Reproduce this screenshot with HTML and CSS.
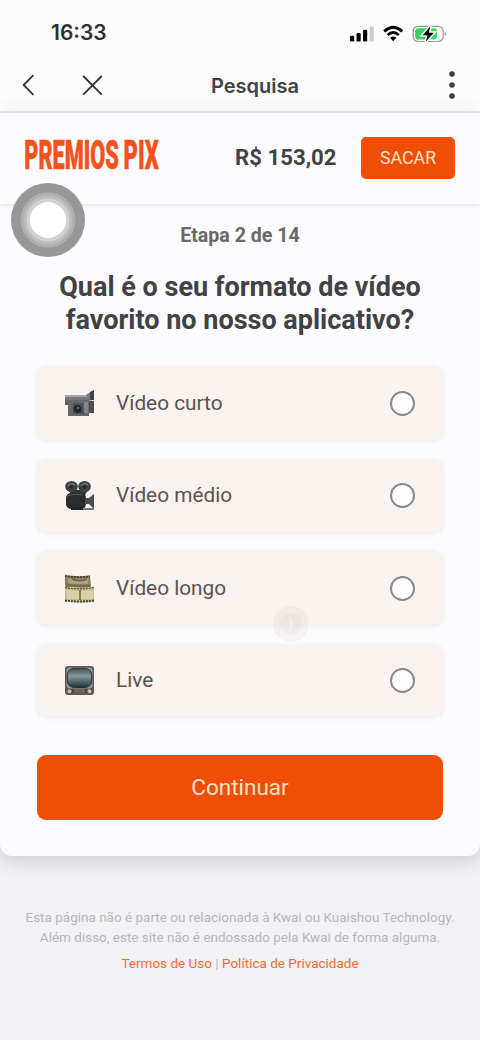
FILE: index.html
```html
<!DOCTYPE html>
<html lang="pt-BR">
<head>
<meta charset="utf-8">
<title>Pesquisa</title>
<link rel="stylesheet" href="styles.css">
</head>
<body>
<div class="status">
  <span class="time">16:33</span>
  <svg class="status-icons" width="98" height="20" viewBox="0 0 98 20">
    <rect x="1" y="11.8" width="4.2" height="5.6" rx="1.2"/>
    <rect x="7.5" y="9" width="4.2" height="8.4" rx="1.2"/>
    <rect x="14" y="5.7" width="4.2" height="11.7" rx="1.2"/>
    <rect x="20.6" y="2.5" width="4.2" height="14.9" rx="1.2" fill="#ccc"/>
    <g fill="none" stroke="#000" stroke-width="2.9">
      <path d="M35.2 7.4Q44.2-.8 53.2 7.4"/>
      <path d="M38.6 11Q44.2 6 49.8 11"/>
    </g>
    <path d="M41 13.7Q44.2 11.1 47.4 13.7L44.2 17.2Z"/>
    <rect x="64.2" y="2.3" width="30" height="15.2" rx="5" fill="#fff" stroke="#979797" stroke-width="1.2"/>
    <path d="M95.7 8Q98.2 9.9 95.7 12Z" fill="#888"/>
    <rect x="66.2" y="4.3" width="21.6" height="11.2" rx="3" fill="#35d45c"/>
    <path d="M81.4 2.3L73.6 11.3H78.5L76.8 17.8L84.8 8.7H79.8Z" stroke="#fff" stroke-width="3"/>
    <path d="M81.4 2.3L73.6 11.3H78.5L76.8 17.8L84.8 8.7H79.8Z"/>
  </svg>
</div>
<nav class="nav">
  <svg class="nav-icon" width="84" height="24" viewBox="0 0 84 24">
    <path d="M12.9 2.700L3.700 12L12.900 21.400M63.700 3.500L81.300 21.100M81.300 3.500L63.700 21.100"/>
  </svg>
  <span class="nav-title">Pesquisa</span>
  <svg class="dots" width="8" height="30" viewBox="0 0 8 30">
    <circle cx="4" cy="4" r="2.8"/><circle cx="4" cy="15" r="2.8"/><circle cx="4" cy="26" r="2.8"/>
  </svg>
</nav>
<main class="card">
  <header class="header">
    <svg class="logo" width="138" height="50" viewBox="0 0 138 50">
      <text transform="translate(.3 38) scale(.56 1)" textLength="169" lengthAdjust="spacingAndGlyphs">PREMIOS</text>
      <text transform="translate(99.6 38) scale(.56 1)" textLength="63" lengthAdjust="spacingAndGlyphs">PIX</text>
    </svg>
    <span class="balance">R$ 153,02</span>
    <span class="withdraw">SACAR</span>
  </header>
  <section class="survey">
    <p class="step">Etapa 2 de 14</p>
    <h1 class="question">Qual é o seu formato de vídeo<br>favorito no nosso aplicativo?</h1>
    <div class="options">
      <label class="option">
        <svg class="icon" width="32" height="32" viewBox="0 0 32 32">
          <path d="M1 7H22L30 2V12L23 13H1Z" fill="#77777d"/>
          <path d="M1 7H22L24 9H1Z" fill="#a5a5ad"/>
          <path d="M26 4L30 2V12H26Z" fill="#414348"/>
          <path d="M1 12H4V17H1ZM4 12H25V28H4Z" fill="#66676c"/>
          <path d="M25 13H30V25H25Z" fill="#4c4e52"/>
          <rect x="9" y="15" width="12" height="11" fill="#505258"/>
          <circle cx="13.500" cy="21" r="4" fill="#24282b"/><circle cx="14" cy="20" r="1.2" fill="#657073"/>
          <path d="M20 14H24V25H20Z" fill="#84858a"/>
        </svg>
        <span class="label">Vídeo curto</span><span class="radio"></span>
      </label>
      <label class="option">
        <svg class="icon" width="32" height="32" viewBox="0 0 32 32">
          <path d="M5 10H24L21 15H7Z" fill="#303638"/>
          <ellipse cx="7.500" cy="6.500" rx="6.300" ry="5.500" fill="#3c4143"/><ellipse cx="20.500" cy="6.500" rx="6.300" ry="5.500" fill="#3c4143"/>
          <path d="M4 6Q7 2 11 5M17 6Q20 2 24 5" fill="none" stroke="#777d7e" stroke-width="1.2"/>
          <circle cx="7.500" cy="7" r="1.7" fill="#1f2425"/><circle cx="20.500" cy="7" r="1.7" fill="#1f2425"/>
          <rect x="2" y="13" width="20" height="16" rx="5" fill="#292f31"/>
          <path d="M4 16Q8 13 18 15" stroke="#596163" fill="none"/>
          <path d="M21 18H25L30 14V29L25 24H21Z" fill="#474e50"/>
          <path d="M14 28H30V30H14Z" fill="#777c7e"/><path d="M7 27H19V30H7Z" fill="#202628"/>
        </svg>
        <span class="label">Vídeo médio</span><span class="radio"></span>
      </label>
      <label class="option">
        <svg class="icon" width="32" height="32" viewBox="0 0 32 32">
          <path d="M1 2Q12 4 26 2.500L27 14H6L1 17Z" fill="#8b8261"/>
          <path d="M4 5Q15 7 24 5V11H4Z" fill="#aaa07b"/>
          <path d="M1 14Q15 16 30 14V29Q16 30.500 1 28Z" fill="#c8bd91"/>
          <path d="M3 17Q10 18 15 18V26H3ZM17 18L29 17V26H17Z" fill="#d9cea7"/>
          <path d="M1 3Q13 5 26 3.500M1 27.500Q15 29.500 30 27.500" fill="none" stroke="#494435" stroke-width="2" stroke-dasharray="2 1"/>
          <path d="M2 10Q15 14 26 11V14Q15 16 3 13Z" fill="#756c4e"/>
          <path d="M1 14.500Q15 17 30 14.500" fill="none" stroke="#625b45" stroke-width="1.500" stroke-dasharray="2 1"/>
          <path d="M16 17V27M8 6Q15 9 23 6" fill="none" stroke="#6c644a" stroke-width="1.400"/>
        </svg>
        <span class="label">Vídeo longo</span><span class="radio"></span>
      </label>
      <label class="option">
        <svg class="icon" width="32" height="32" viewBox="0 0 32 32">
          <defs><linearGradient id="screen" x2="0" y2="1"><stop stop-color="#3d5154"/><stop offset=".4" stop-color="#82999b"/><stop offset="1" stop-color="#1e3538"/></linearGradient></defs>
          <rect x="1" y="1" width="29" height="29" rx="3" fill="#655755"/>
          <rect x="2.500" y="2.500" width="26" height="21" rx="3" fill="#9b908b"/>
          <rect x="3.300" y="3.300" width="24.400" height="19.200" rx="7" fill="url(#screen)" stroke="#263235"/>
          <path d="M3 24H28V28H3Z" fill="#504542"/>
          <circle cx="5.500" cy="26.300" r="2" fill="#c9bdb5"/><circle cx="25.500" cy="26.300" r="2" fill="#c9bdb5"/>
          <path d="M10 25H21M10 27H21" stroke="#8f817b"/>
        </svg>
        <span class="label">Live</span><span class="radio"></span>
      </label>
    </div>
    <div class="continue">Continuar</div>
  </section>
</main>
<footer class="footer">
  <p class="legal">Esta página não é parte ou relacionada à Kwai ou Kuaishou Technology.<br>Além disso, este site não é endossado pela Kwai de forma alguma.</p>
  <p class="links"><span class="link">Termos de Uso</span> | <span class="link">Política de Privacidade</span></p>
</footer>
<div class="touch"></div>
<svg class="watermark" width="38" height="40" viewBox="0 0 38 40">
  <circle cx="19" cy="20" r="18" fill="#b9acb0" opacity=".11"/>
  <circle cx="19" cy="20" r="11" fill="#b9acb0" opacity=".07"/>
  <path d="M18 11L17 29L22 21Z" fill="#fff" opacity=".3"/>
</svg>
</body>
</html>
```
FILE: styles.css
```css
* { box-sizing: border-box; }
body {
  margin: 0;
  width: 480px;
  height: 1040px;
  overflow: hidden;
  position: relative;
  background: #f2f1f5;
  color: #424144;
  font-family: Roboto, sans-serif;
  white-space: nowrap;
}
p, h1 { margin: 0; }
.status {
  height: 58px;
  padding: 7px 33px 0 51px;
  display: flex;
  align-items: center;
  justify-content: space-between;
  background: #fcfcfc;
}
.time { font: 600 21px/24px Inter, sans-serif; color: #303033; }
.status-icons { margin-top: 3px; }
.nav {
  height: 55px;
  padding: 0 24px 0 20px;
  display: grid;
  grid-template-columns: 84px 1fr 84px;
  align-items: center;
  background: #fcfcfc;
  border-bottom: 2px solid #f0f0f1;
}
.nav-icon { fill: none; stroke: #37373a; stroke-width: 1.9; stroke-linecap: round; stroke-linejoin: round; }
.nav-title { text-align: center; padding: 2px 0 0 34px; font: 600 20px/24px Inter, sans-serif; }
.dots { justify-self: end; fill: #3e3e41; }
.card {
  height: 743px;
  background: #fcfbfd;
  border-radius: 0 0 12px 12px;
  box-shadow: 0 5px 20px rgba(50, 50, 60, .2);
}
.header {
  height: 91px;
  padding: 0 25px 2px 24px;
  display: flex;
  align-items: center;
  box-shadow: 0 1px 4px rgba(0, 0, 0, .1);
}
.logo { margin-top: -4px; overflow: visible; }
.logo text { font: 900 40.500px Roboto, sans-serif; fill: #f4511b; stroke: #f4511b; stroke-width: .5px; }
.balance { margin: -2px 0 0 73px; font-size: 22.200px; font-weight: 700; }
.withdraw {
  margin-left: auto;
  width: 94px;
  height: 42px;
  border-radius: 5px;
  background: #f04e05;
  color: #ffe1cc;
  font-size: 17.800px;
  line-height: 42px;
  text-align: center;
}
.survey { padding: 19px 37px 0; text-align: center; }
.step { padding-top: 1px; font-size: 19.600px; line-height: 24px; font-weight: 700; color: #69686b; }
.question { margin-top: 23px; font-size: 27px; line-height: 33px; font-weight: 700; }
.options { margin-top: 29.400px; display: grid; gap: 18.500px; }
.option {
  height: 73.900px;
  padding: 0 28px 0 27px;
  display: flex;
  align-items: center;
  border-radius: 10px;
  background: #faf2ee;
  box-shadow: 0 1px 4px rgba(60, 60, 80, .1);
}
.icon { margin-top: 1px; }
.label { margin: -1px 0 0 20px; font-size: 20.800px; color: #5b5352; }
.radio { margin-left: auto; width: 25px; height: 25px; border: 2px solid #8b8888; border-radius: 50%; background: #fefdfd; }
.continue {
  margin-top: 37.500px;
  height: 65px;
  border-radius: 9px;
  background: #f04e05;
  color: #ffe0cb;
  font-size: 22.500px;
  line-height: 65px;
}
.footer { padding-top: 51px; text-align: center; color: #b9b8bb; }
.legal { font-size: 13.500px; line-height: 20px; }
.links { margin-top: 6px; font-size: 13.500px; line-height: 20px; }
.link { color: #f36b2c; }
.touch {
  position: absolute;
  left: 11px;
  top: 183px;
  width: 74px;
  height: 74px;
  border-radius: 50%;
  background: radial-gradient(circle, #fff 0 17.500px, #d2d2d2 18.500px 21px, #bebebe 22px 24px, #adadad 25px 27px, #979797 28px);
}
.watermark { position: absolute; left: 272px; top: 604px; }
```
